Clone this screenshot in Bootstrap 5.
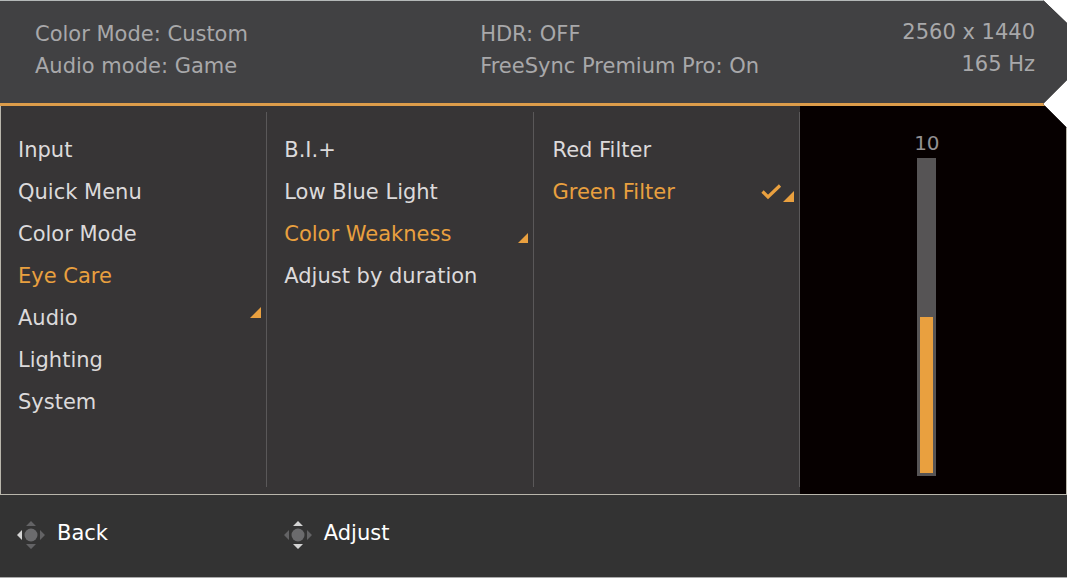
<!DOCTYPE html>
<html lang="en">
<head>
<meta charset="utf-8">
<meta name="viewport" content="width=device-width, initial-scale=1">
<title>Monitor menu</title>
<link href="https://cdn.jsdelivr.net/npm/bootstrap@5.3.0/dist/css/bootstrap.min.css" rel="stylesheet">
<style>
  :root { --osd-accent: #e9a03f; }
  body { background: #fff; font-family: "DejaVu Sans", sans-serif; font-size: 21px; line-height: 32px; }
  .osd { background: #333; clip-path: polygon(0 0, calc(100% - 24px) 0, 100% 23px, 100% 80px, calc(100% - 24px) 104px, 100% 128px, 100% 100%, 0 100%); border-bottom: 1px solid #aaa; }
  .osd-status { background: #414143; color: #a8a8aa; border-top: 1px solid #b4b8b8; border-bottom: 3px solid #dc9c4a; padding: 17px 0 21px; }
  .osd-status-a { width: 45%; padding-left: 35px; }
  .osd-status-c { margin-top: -2px; padding-right: 32px; }
  .osd-body { background: #373536; border: solid #b9b6ac; border-width: 0 1px 1px; }
  .osd-menu { padding: 23px 6px 0 17px; position: relative; }
  .osd-menu::after { content: ""; position: absolute; right: 0; top: 6px; bottom: 7px; width: 1px; background: #5a5859; }
  .osd-item { background: none; border: 0; padding: 0; height: 42px; width: 100%; color: #dcdadb; text-align: left; display: flex; align-items: center; }
  .osd-item.active { color: var(--osd-accent); }
  .osd-item svg { margin-left: auto; flex: none; }
  .osd-open { align-self: flex-start; margin-top: 10px; }
  .osd-filters { padding-left: 19px; }
  .osd-level { background: #060000; color: #929092; font-size: 20px; padding: 23px 12px 18px 0; }
  .osd-level label { line-height: 29px; }
  .osd-range { appearance: none; -webkit-appearance: none; writing-mode: vertical-lr; direction: rtl; width: 19px; min-height: 120px; margin: 0; border: 3px solid #565455; background: linear-gradient(to top, #e9a03f 50%, #565455 50%); }
  .osd-range::-webkit-slider-thumb { -webkit-appearance: none; width: 1px; height: 1px; background: transparent; }
  .osd-hint { background: none; border: 0; color: #fff; padding: 0 0 0 17px; gap: 12px; }
  .osd-footer { padding: 22px 0 28px; }
</style>
</head>
<body>
<svg class="d-none" aria-hidden="true">
  <symbol id="corner" viewBox="0 0 11 11"><path d="M11 0V11H0Z" fill="#e9a03f"/></symbol>
</svg>
<main class="osd min-vh-100 d-flex flex-column">
  <header class="osd-status d-flex">
    <div class="osd-status-a"><div>Color Mode: Custom</div><div>Audio mode: Game</div></div>
    <div><div>HDR: OFF</div><div>FreeSync Premium Pro: On</div></div>
    <div class="osd-status-c ms-auto text-end"><div>2560 x 1440</div><div>165 Hz</div></div>
  </header>
  <div class="osd-body row g-0 flex-grow-1">
    <nav class="osd-menu col-3" aria-label="Main menu">
      <button class="osd-item">Input</button>
      <button class="osd-item">Quick Menu</button>
      <button class="osd-item">Color Mode</button>
      <button class="osd-item active">Eye Care</button>
      <button class="osd-item">Audio<svg class="osd-open" width="11" height="11"><use href="#corner"/></svg></button>
      <button class="osd-item">Lighting</button>
      <button class="osd-item">System</button>
    </nav>
    <nav class="osd-menu col-3" aria-label="Eye Care">
      <button class="osd-item">B.I.+</button>
      <button class="osd-item">Low Blue Light</button>
      <button class="osd-item active">Color Weakness<svg class="mt-2" width="10" height="10"><use href="#corner"/></svg></button>
      <button class="osd-item">Adjust by duration</button>
    </nav>
    <nav class="osd-menu osd-filters col-3" aria-label="Color Weakness">
      <button class="osd-item">Red Filter</button>
      <button class="osd-item active">Green Filter
        <svg width="22" height="16" viewBox="0 0 22 16"><path d="M1.500 7.500L7 13L19 1.500" fill="none" stroke="#e9a03f" stroke-width="3.200"/></svg>
        <svg class="ms-0 mt-2" width="11" height="11"><use href="#corner"/></svg>
      </button>
    </nav>
    <section class="osd-level col-3 d-flex flex-column align-items-center">
      <label for="level">10</label>
      <input class="osd-range flex-grow-1" id="level" type="range" min="0" max="20" value="10">
    </section>
  </div>
  <footer class="osd-footer row g-0">
    <div class="col-3">
      <button class="osd-hint d-flex align-items-center">
        <svg class="mt-1" width="28" height="28" viewBox="0 0 28 28" fill="#636365"><circle cx="14" cy="14" r="6.500" fill="#6b6b6d"/><path d="M14 0L19 5H9ZM14 28L19 23H9ZM28 14L23 9V19Z"/><path d="M0 14L5 9V19Z" fill="#d4d4d4"/></svg>
        <span>Back</span>
      </button>
    </div>
    <div class="col-3">
      <button class="osd-hint d-flex align-items-center">
        <svg class="mt-1" width="28" height="28" viewBox="0 0 28 28" fill="#636365"><circle cx="14" cy="14" r="6.500" fill="#6b6b6d"/><path d="M0 14L5 9V19ZM28 14L23 9V19Z"/><path d="M14 0L19 5H9ZM14 28L19 23H9Z" fill="#d4d4d4"/></svg>
        <span>Adjust</span>
      </button>
    </div>
  </footer>
</main>
<script src="https://cdn.jsdelivr.net/npm/bootstrap@5.3.0/dist/js/bootstrap.bundle.min.js"></script>
</body>
</html>
